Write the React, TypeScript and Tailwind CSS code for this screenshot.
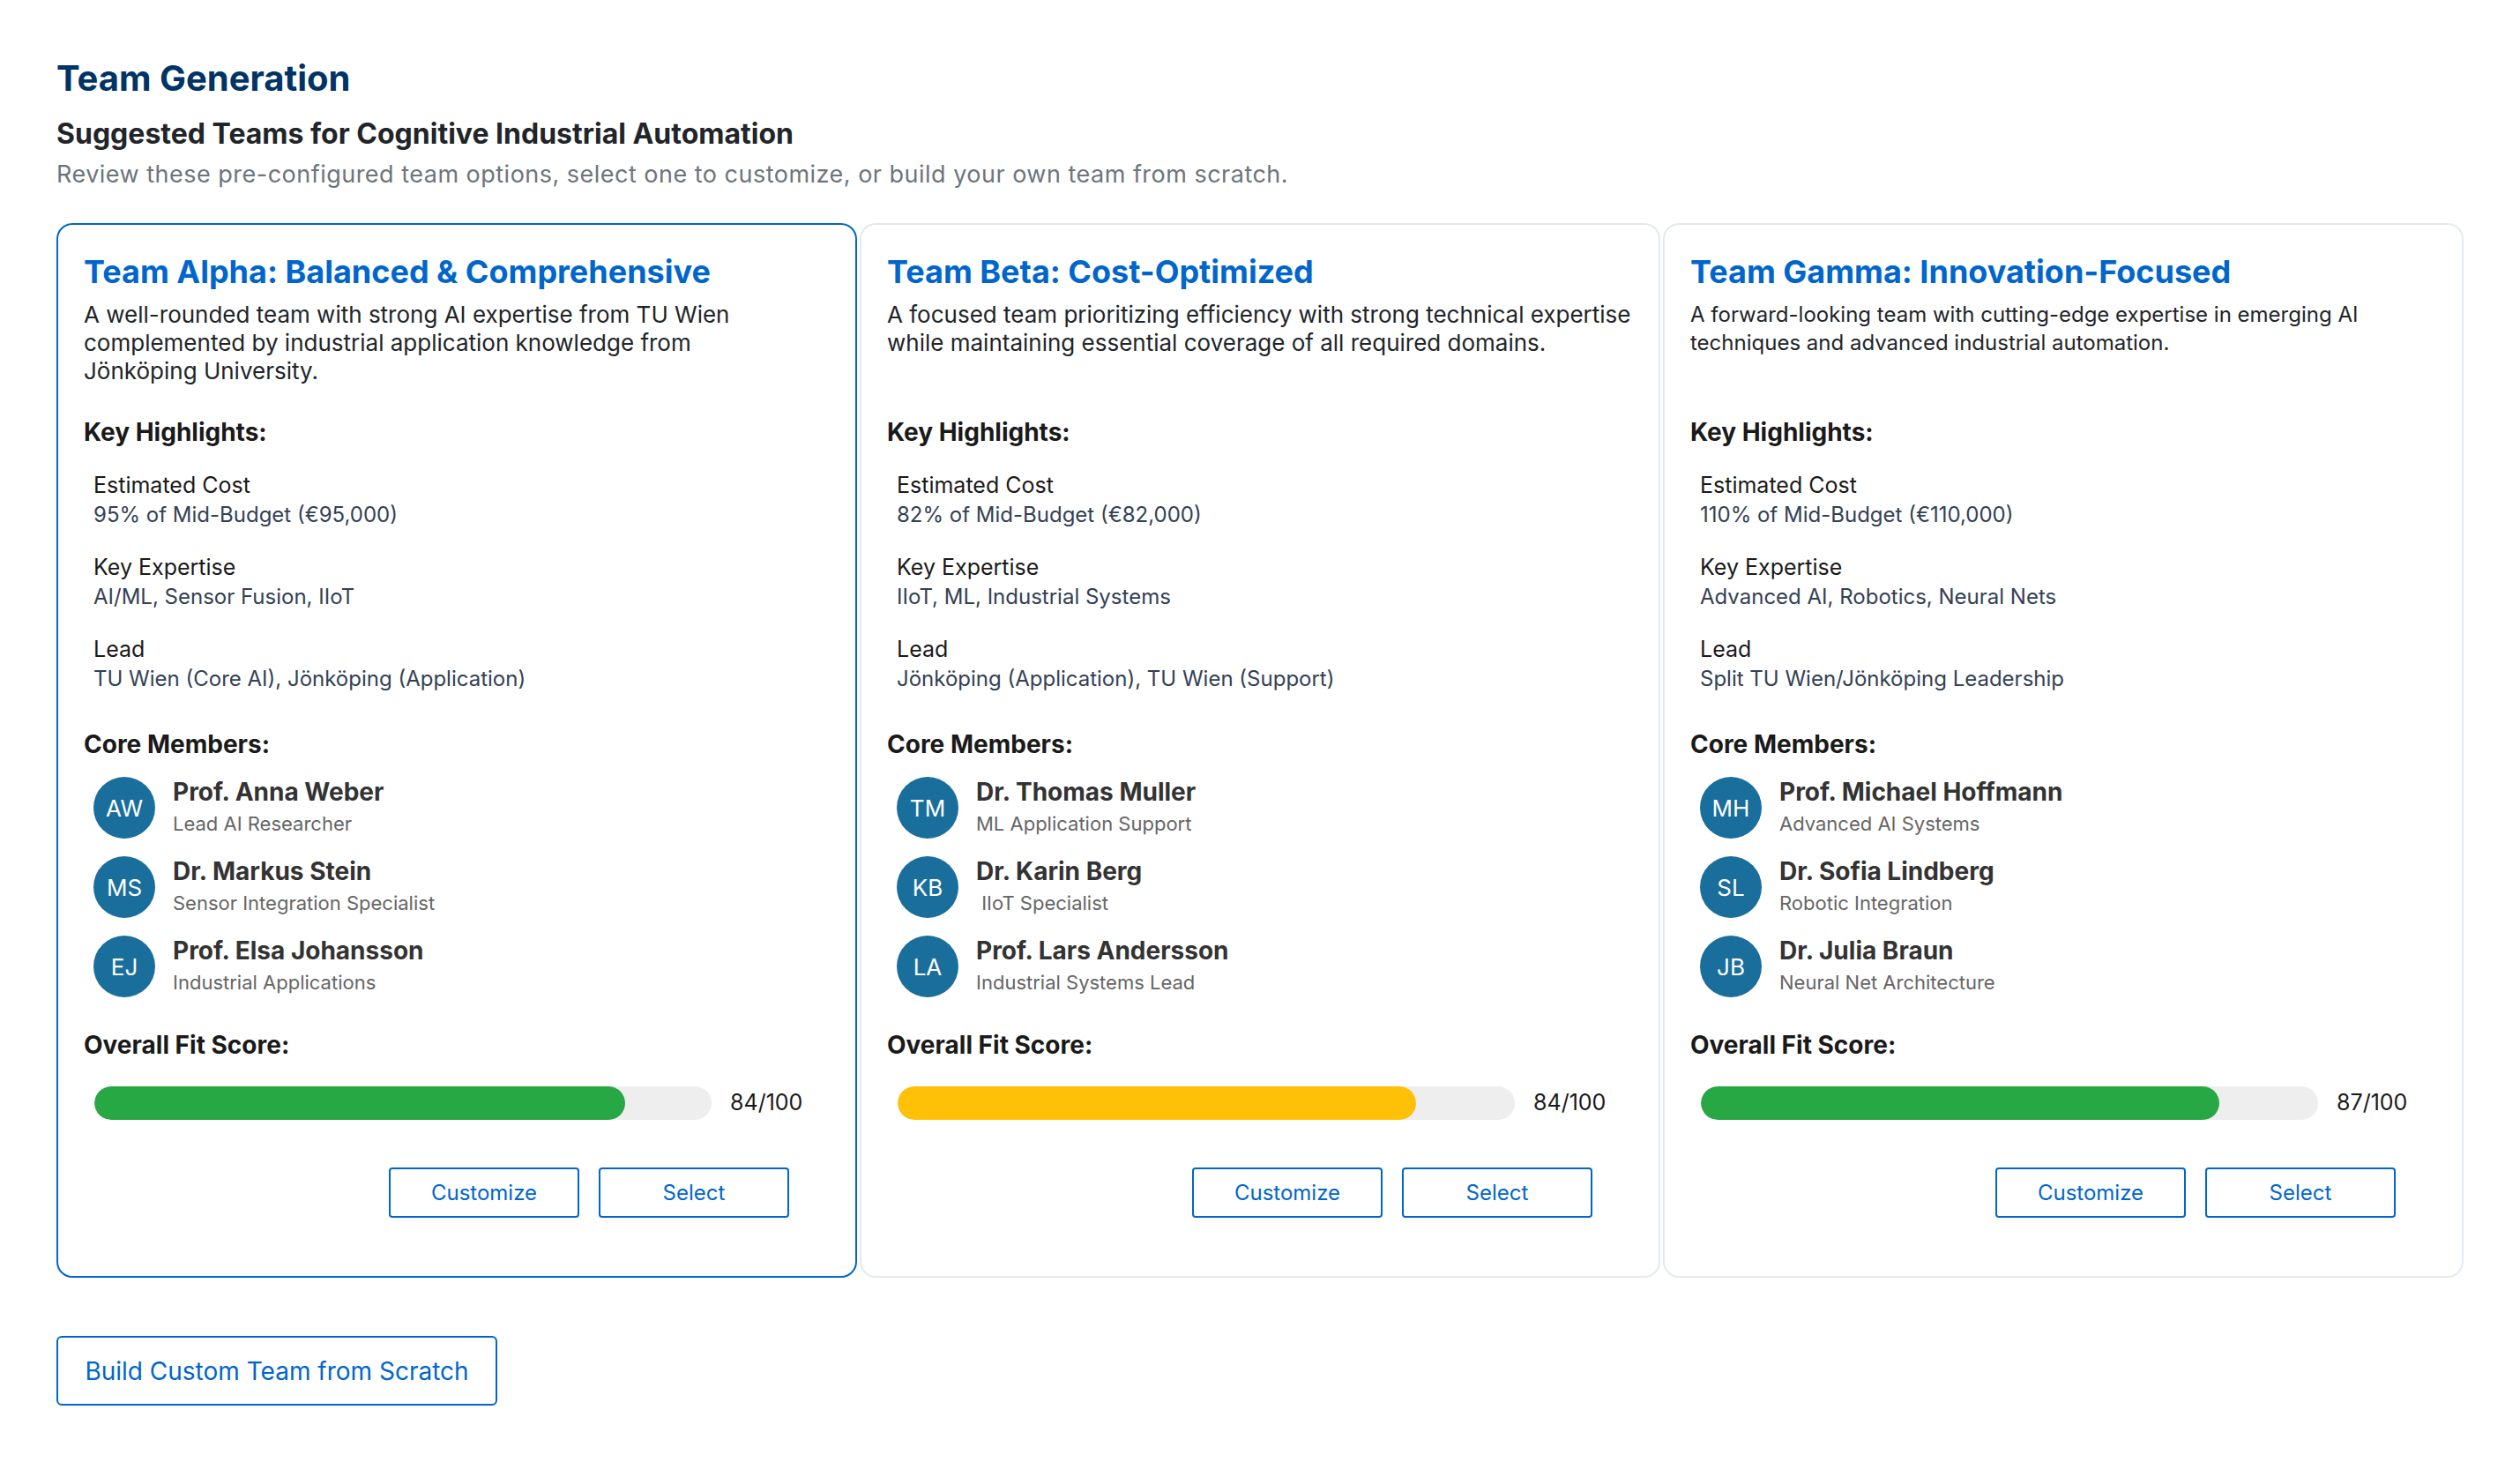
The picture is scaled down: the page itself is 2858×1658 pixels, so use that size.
import React from "react";

type Member = { initials: string; name: string; role: string };

type Team = {
  title: string;
  description: string;
  descSize: string;
  cost: string;
  expertise: string;
  lead: string;
  members: Member[];
  score: number;
  barWidth: number;
  barColor: string;
  selected?: boolean;
};

const teams: Team[] = [
  {
    title: "Team Alpha: Balanced & Comprehensive",
    description:
      "A well-rounded team with strong AI expertise from TU Wien complemented by industrial application knowledge from Jönköping\u00a0University.",
    descSize: "text-[26px]",
    cost: "95% of Mid-Budget (€95,000)",
    expertise: "AI/ML, Sensor Fusion, IIoT",
    lead: "TU Wien (Core AI), Jönköping (Application)",
    members: [
      { initials: "AW", name: "Prof. Anna Weber", role: "Lead AI Researcher" },
      { initials: "MS", name: "Dr. Markus Stein", role: "Sensor Integration Specialist" },
      { initials: "EJ", name: "Prof. Elsa Johansson", role: "Industrial Applications" },
    ],
    score: 84,
    barWidth: 86,
    barColor: "bg-[#28a745]",
    selected: true,
  },
  {
    title: "Team Beta: Cost-Optimized",
    description:
      "A focused team prioritizing efficiency with strong technical expertise while maintaining essential coverage of all required domains.",
    descSize: "text-[26px]",
    cost: "82% of Mid-Budget (€82,000)",
    expertise: "IIoT, ML, Industrial Systems",
    lead: "Jönköping (Application), TU Wien (Support)",
    members: [
      { initials: "TM", name: "Dr. Thomas Muller", role: "ML Application Support" },
      { initials: "KB", name: "Dr. Karin Berg", role: "\u00a0IIoT Specialist" },
      { initials: "LA", name: "Prof. Lars Andersson", role: "Industrial Systems Lead" },
    ],
    score: 84,
    barWidth: 84,
    barColor: "bg-[#ffc107]",
  },
  {
    title: "Team Gamma: Innovation-Focused",
    description:
      "A forward-looking team with cutting-edge expertise in emerging AI techniques and advanced industrial automation.",
    descSize: "text-[24px]",
    cost: "110% of Mid-Budget (€110,000)",
    expertise: "Advanced AI, Robotics, Neural Nets",
    lead: "Split TU Wien/Jönköping Leadership",
    members: [
      { initials: "MH", name: "Prof. Michael Hoffmann", role: "Advanced AI Systems" },
      { initials: "SL", name: "Dr. Sofia Lindberg", role: "Robotic Integration" },
      { initials: "JB", name: "Dr. Julia Braun", role: "Neural Net Architecture" },
    ],
    score: 87,
    barWidth: 84,
    barColor: "bg-[#28a745]",
  },
];

const Highlight = ({ label, value }: { label: string; value: string }) => (
  <div>
    <div className="text-[25px] leading-[34px] text-[#1a1a1a]">{label}</div>
    <div className="text-[24px] leading-[34px] text-[#334155]">{value}</div>
  </div>
);

const TeamCard = ({ team }: { team: Team }) => (
  <div
    className={`rounded-[18px] border-2 bg-white px-[29px] pt-[32px] pb-[66px] ${
      team.selected ? "border-[#0066cc]" : "border-[#e4e9f0]"
    }`}
  >
    <h3 className="text-[36px] leading-[42px] font-bold text-[#0066cc]">
      {team.title}
    </h3>
    <p
      className={`mt-[12px] min-h-[96px] ${team.descSize} leading-[32px] text-[#212529]`}
    >
      {team.description}
    </p>

    <h4 className="mt-[36px] text-[28px] leading-[34px] font-bold text-[#1a1a1a]">
      Key Highlights:
    </h4>
    <div className="mt-[26px] ml-[11px] flex flex-col gap-[25px]">
      <Highlight label="Estimated Cost" value={team.cost} />
      <Highlight label="Key Expertise" value={team.expertise} />
      <Highlight label="Lead" value={team.lead} />
    </div>

    <h4 className="mt-[40px] text-[28px] leading-[34px] font-bold text-[#1a1a1a]">
      Core Members:
    </h4>
    <div className="mt-[20px] ml-[11px] flex flex-col gap-[20px]">
      {team.members.map((m) => (
        <div key={m.initials} className="flex items-center gap-[20px]">
          <div className="flex h-[70px] w-[70px] shrink-0 items-center justify-center rounded-full bg-[#1a6e9c] text-[26px] text-white">
            {m.initials}
          </div>
          <div className="-mt-[2px]">
            <div className="text-[28px] leading-[34px] font-bold text-[#333333]">
              {m.name}
            </div>
            <div className="mt-[4px] text-[22px] leading-[30px] text-[#666666]">
              {m.role}
            </div>
          </div>
        </div>
      ))}
    </div>

    <h4 className="mt-[37px] text-[28px] leading-[34px] font-bold text-[#1a1a1a]">
      Overall Fit Score:
    </h4>
    <div className="mt-[30px] ml-[12px] flex items-center gap-[21px]">
      <div className="h-[38px] w-[700px] overflow-hidden rounded-full bg-[#eeeeee]">
        <div
          className={`h-full rounded-full ${team.barColor}`}
          style={{ width: `${team.barWidth}%` }}
        />
      </div>
      <span className="text-[25px] text-[#1a1a1a]">{team.score}/100</span>
    </div>

    <div className="mt-[54px] mr-[46px] flex justify-end gap-[22px]">
      <button className="h-[57px] w-[216px] rounded-[4px] border-2 border-[#0066cc] bg-white text-[24px] text-[#0066cc]">
        Customize
      </button>
      <button className="h-[57px] w-[216px] rounded-[4px] border-2 border-[#0066cc] bg-white text-[24px] text-[#0066cc]">
        Select
      </button>
    </div>
  </div>
);

export default function App() {
  return (
    <div
      className="min-h-screen bg-white px-[64px] pt-[64px] pb-[60px]"
      style={{ fontFamily: "Inter, 'Noto Sans', sans-serif" }}
    >
      <h1 className="text-[40px] leading-[50px] font-bold text-[#003366]">
        Team Generation
      </h1>
      <h2 className="mt-[19px] text-[32px] leading-[38px] font-bold text-[#212529]">
        Suggested Teams for Cognitive Industrial Automation
      </h2>
      <p className="mt-[10px] text-[27px] leading-[34px] tracking-[0.018em] text-[#6c757d]">
        Review these pre-configured team options, select one to customize, or
        build your own team from scratch.
      </p>

      <div className="mt-[38px] grid grid-cols-3 gap-[3px]">
        {teams.map((t) => (
          <TeamCard key={t.title} team={t} />
        ))}
      </div>

      <button className="mt-[66px] h-[79px] w-[500px] rounded-[6px] border-2 border-[#0066cc] bg-white text-[28px] text-[#0066cc]">
        Build Custom Team from Scratch
      </button>
    </div>
  );
}
